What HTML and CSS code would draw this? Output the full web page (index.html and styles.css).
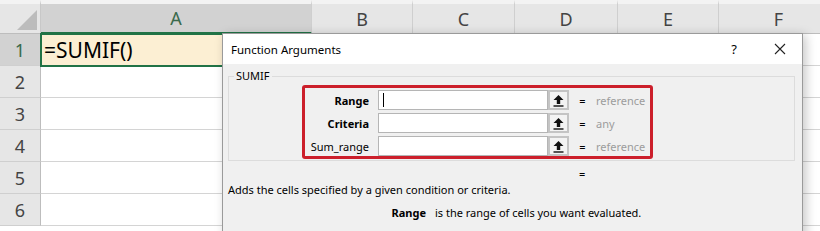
FILE: index.html
```html
<!DOCTYPE html>
<html lang="en">
    <head>
        <meta charset="UTF-8">
        <title>SUMIF - Function Arguments</title>
        <link rel="stylesheet" href="styles.css">
    </head>
    <body>
        <div class="sheet">
            <div class="grid">
                <div class="corner"><span class="tri"></span></div>
                <div class="colhead sel">A</div>
                <div class="colhead">B</div>
                <div class="colhead">C</div>
                <div class="colhead">D</div>
                <div class="colhead">E</div>
                <div class="colhead">F</div>

                <div class="rowhead sel">1</div>
                <div class="cell a1">=SUMIF()</div>
                <div class="cell"></div><div class="cell"></div><div class="cell"></div><div class="cell"></div><div class="cell"></div>

                <div class="rowhead">2</div>
                <div class="cell"></div><div class="cell"></div><div class="cell"></div><div class="cell"></div><div class="cell"></div><div class="cell"></div>

                <div class="rowhead">3</div>
                <div class="cell"></div><div class="cell"></div><div class="cell"></div><div class="cell"></div><div class="cell"></div><div class="cell"></div>

                <div class="rowhead">4</div>
                <div class="cell"></div><div class="cell"></div><div class="cell"></div><div class="cell"></div><div class="cell"></div><div class="cell"></div>

                <div class="rowhead">5</div>
                <div class="cell"></div><div class="cell"></div><div class="cell"></div><div class="cell"></div><div class="cell"></div><div class="cell"></div>

                <div class="rowhead">6</div>
                <div class="cell"></div><div class="cell"></div><div class="cell"></div><div class="cell"></div><div class="cell"></div><div class="cell"></div>
            </div>

            <div class="dialog">
                <div class="dlg-title">
                    <span class="dlg-name">Function Arguments</span>
                    <span class="dlg-help">?</span>
                    <svg class="dlg-close" width="12" height="12" viewBox="0 0 12 12">
                        <path d="M1 1 L11 11 M11 1 L1 11" stroke="#222" stroke-width="1.1" fill="none"/>
                    </svg>
                </div>
                <div class="dlg-body">
                    <fieldset class="group">
                        <legend>SUMIF</legend>
                        <div class="args">
                            <div class="arg">
                                <span class="arg-name req">Range</span>
                                <span class="field"><span class="caret"></span></span>
                                <span class="pick">
                                    <svg width="11" height="13" viewBox="0 0 11 13"><path d="M5.5 1 L10.5 6 L7.2 6 L7.2 10 L3.8 10 L3.8 6 L0.5 6 Z" fill="#111"/><rect x="0.5" y="11.3" width="10" height="1.4" fill="#111"/></svg>
                                </span>
                                <span class="eq">=</span>
                                <span class="hint">reference</span>
                            </div>
                            <div class="arg">
                                <span class="arg-name req">Criteria</span>
                                <span class="field"></span>
                                <span class="pick">
                                    <svg width="11" height="13" viewBox="0 0 11 13"><path d="M5.5 1 L10.5 6 L7.2 6 L7.2 10 L3.8 10 L3.8 6 L0.5 6 Z" fill="#111"/><rect x="0.5" y="11.3" width="10" height="1.4" fill="#111"/></svg>
                                </span>
                                <span class="eq">=</span>
                                <span class="hint">any</span>
                            </div>
                            <div class="arg">
                                <span class="arg-name">Sum_range</span>
                                <span class="field"></span>
                                <span class="pick">
                                    <svg width="11" height="13" viewBox="0 0 11 13"><path d="M5.5 1 L10.5 6 L7.2 6 L7.2 10 L3.8 10 L3.8 6 L0.5 6 Z" fill="#111"/><rect x="0.5" y="11.3" width="10" height="1.4" fill="#111"/></svg>
                                </span>
                                <span class="eq">=</span>
                                <span class="hint">reference</span>
                            </div>
                        </div>
                    </fieldset>
                    <div class="result">=</div>
                    <div class="desc">Adds the cells specified by a given condition or criteria.</div>
                    <div class="argdesc">
                        <span class="argdesc-name">Range</span>
                        <span>is the range of cells you want evaluated.</span>
                    </div>
                </div>
            </div>
        </div>
    </body>
</html>
```

FILE: styles.css
```css
body {
    margin: 0;
    background-color: #fff;
    font-family: "Noto Sans", "Liberation Sans", sans-serif;
    overflow: hidden;
}
.sheet {
    position: relative;
    width: 820px;
    height: 231px;
    overflow: hidden;
}
.grid {
    display: grid;
    grid-template-columns: 41px 271px 101px 102px 103px 101px 120px;
    grid-template-rows: 34px repeat(6, 32px);
}
.corner {
    position: relative;
    background-color: #e6e6e6;
    border-top: 4px solid #f3f3f3;
    border-right: 1px solid #c8c8c8;
    border-bottom: 1px solid #bdbdbd;
}
.tri {
    position: absolute;
    right: 3px;
    bottom: 3px;
    width: 0;
    height: 0;
    border-left: 20px solid transparent;
    border-bottom: 20px solid #bcbcbc;
}
.colhead {
    display: flex;
    align-items: center;
    justify-content: center;
    background-color: #e6e6e6;
    border-top: 4px solid #f3f3f3;
    border-right: 1px solid #cfcfcf;
    border-bottom: 1px solid #bdbdbd;
    color: #444;
    font-size: 18px;
}
.colhead.sel {
    background-color: #d2d2d2;
    border-bottom: 2px solid #217346;
    color: #3a6a4c;
}
.rowhead {
    display: flex;
    align-items: center;
    justify-content: center;
    background-color: #e6e6e6;
    border-right: 1px solid #bdbdbd;
    border-bottom: 1px solid #cfcfcf;
    color: #444;
    font-size: 18px;
}
.rowhead.sel {
    background-color: #d2d2d2;
    color: #3a6a4c;
}
.cell {
    border-right: 1px solid #d4d4d4;
    border-bottom: 1px solid #d4d4d4;
}
.a1 {
    position: relative;
    display: flex;
    align-items: center;
    padding-left: 3px;
    background-color: #fcefd3;
    outline: 2px solid #217346;
    outline-offset: -1px;
    font-size: 21px;
    color: #000;
}
.dialog {
    position: absolute;
    left: 222px;
    top: 33px;
    width: 579px;
    height: 220px;
    border: 1px solid #9a9a9a;
    background-color: #f0f0f0;
    box-shadow: 3px 2px 10px rgba(0, 0, 0, 0.22);
    font-size: 11px;
    color: #000;
}
.dlg-title {
    display: flex;
    align-items: center;
    height: 30px;
    padding-left: 8px;
    background-color: #fff;
    font-size: 11.5px;
}
.dlg-name {
    flex: 1;
}
.dlg-help {
    margin-right: 37px;
    font-size: 13px;
}
.dlg-close {
    margin-right: 16px;
}
.dlg-body {
    padding: 4px 7px 0 5px;
}
.group {
    margin: 0;
    padding: 0 0 1px 0;
    border: 1px solid #dcdcdc;
}
.group legend {
    margin-left: 5px;
    padding: 0 2px;
    font-size: 11px;
    line-height: 16px;
}
.args {
    width: 351px;
    margin: 1px 0 0 73px;
    padding: 2px 0 0 0;
    box-sizing: border-box;
    border: 3px solid #cc1f2b;
    border-radius: 3px;
}
.arg {
    display: flex;
    align-items: center;
    height: 20px;
    margin-bottom: 3px;
}
.arg:last-child {
    margin-bottom: 0;
}
.arg-name {
    width: 64px;
    margin-right: 9px;
    text-align: right;
}
.arg-name.req {
    font-weight: bold;
}
.field {
    display: flex;
    align-items: center;
    width: 170px;
    height: 20px;
    box-sizing: border-box;
    border: 1px solid #b5b5b5;
    background-color: #fff;
}
.caret {
    width: 1px;
    height: 14px;
    margin-left: 4px;
    background-color: #000;
}
.pick {
    display: flex;
    align-items: center;
    justify-content: center;
    width: 21px;
    height: 20px;
    box-sizing: border-box;
    border: 2px solid #c4c4c4;
    background-color: #f3f3f3;
}
.eq {
    width: 27px;
    text-align: center;
}
.hint {
    color: #9c9c9c;
}
.result {
    height: 16px;
    line-height: 16px;
    margin-top: 5px;
    padding-left: 351px;
}
.desc {
    height: 16px;
    line-height: 16px;
}
.argdesc {
    display: flex;
    margin-top: 7px;
    line-height: 16px;
}
.argdesc-name {
    width: 198px;
    margin-right: 9px;
    text-align: right;
    font-weight: bold;
}
```
